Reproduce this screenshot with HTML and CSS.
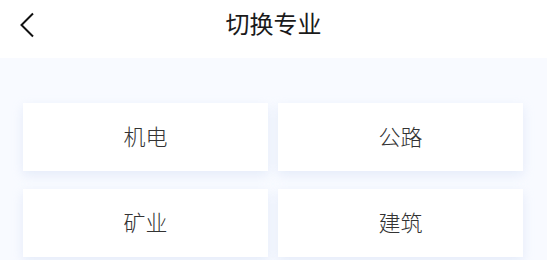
FILE: index.html
```html
<!DOCTYPE html>
<html lang="zh">
<head>
<meta charset="utf-8">
<link rel="stylesheet" href="styles.css">
</head>
<body>
<div class="page">
  <header class="header">
    <span class="back">
      <svg width="16" height="26" viewBox="0 0 16 26"><path d="M14 1.5 L2.5 13 L14 24.5" fill="none" stroke="#111" stroke-width="2"/></svg>
    </span>
    <h1 class="title">切换专业</h1>
  </header>
  <main class="content">
    <div class="grid">
      <div class="card">机电</div>
      <div class="card">公路</div>
      <div class="card">矿业</div>
      <div class="card">建筑</div>
    </div>
  </main>
</div>
</body>
</html>
```
FILE: styles.css
```css
html, body { margin: 0; padding: 0; }
body {
  font-family: "Noto Sans CJK SC", "Noto Sans", sans-serif;
  background: #f8faff;
  width: 547px;
  height: 260px;
  overflow: hidden;
}
.header {
  position: relative;
  height: 58px;
  background: #ffffff;
  display: flex;
  align-items: center;
  justify-content: center;
}
.back {
  position: absolute;
  left: 19px;
  top: 12px;
  display: flex;
}
.title {
  margin: 0;
  font-size: 24px;
  font-weight: 400;
  color: #1a1a1a;
  line-height: 1;
  margin-top: -13px;
}
.content {
  padding: 45px 24px 0 23px;
}
.grid {
  display: grid;
  grid-template-columns: 245px 245px;
  column-gap: 10px;
  row-gap: 18px;
}
.card {
  height: 68px;
  background: #ffffff;
  box-shadow: 0 4px 10px rgba(200, 215, 240, 0.4);
  display: flex;
  align-items: center;
  justify-content: center;
  font-size: 22px;
  font-weight: 300;
  color: #333;
  line-height: 1;
  padding-bottom: 4px;
  box-sizing: border-box;
}
```
